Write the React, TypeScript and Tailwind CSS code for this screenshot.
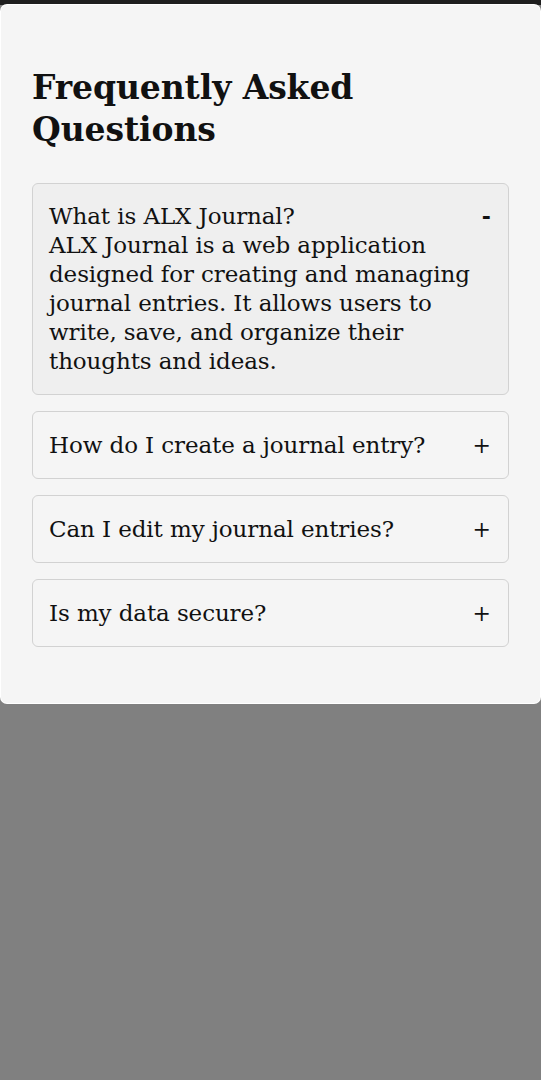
import React from "react";

const items = [
  {
    q: "What is ALX Journal?",
    a: "ALX Journal is a web application designed for creating and managing journal entries. It allows users to write, save, and organize their thoughts and ideas.",
    open: true,
  },
  { q: "How do I create a journal entry?", open: false },
  { q: "Can I edit my journal entries?", open: false },
  { q: "Is my data secure?", open: false },
];

export default function App() {
  return (
    <div
      className="min-h-[1080px] bg-[#808080] text-[#111]"
      style={{ fontFamily: '"DejaVu Serif", "Liberation Serif", serif' }}
    >
      <div className="h-[5px] bg-[#1e1e1e]" />
      <div className="mx-[1px] rounded-b-[6px] rounded-t-[6px] bg-[#f5f5f5] px-[31px] pb-[56px] pt-[62px] shadow-[0_0_0_1px_#ffffff]">
        <h1 className="text-[33px] font-bold leading-[42px] tracking-[-0.1px] text-[#111]">
          Frequently Asked
          <br />
          Questions
        </h1>
        <div className="mt-[32px] flex flex-col gap-[16px]">
          {items.map((it) => (
            <div
              key={it.q}
              className={`flex items-start justify-between rounded-[6px] border border-[#d2d2d2] pl-[16px] pr-[17px] ${
                it.open ? "bg-[#efefef] py-[18px]" : "bg-[#f5f5f5] pb-[18px] pt-[19px]"
              }`}
            >
              <div className="flex-1 pr-[8px] text-[23px] leading-[29px] tracking-[-0.1px]">
                <div>{it.q}</div>
                {it.open && <div>{it.a}</div>}
              </div>
              <div className="text-[22px] leading-[29px]">
                {it.open ? <span className="font-bold">-</span> : "+"}
              </div>
            </div>
          ))}
        </div>
      </div>
    </div>
  );
}
